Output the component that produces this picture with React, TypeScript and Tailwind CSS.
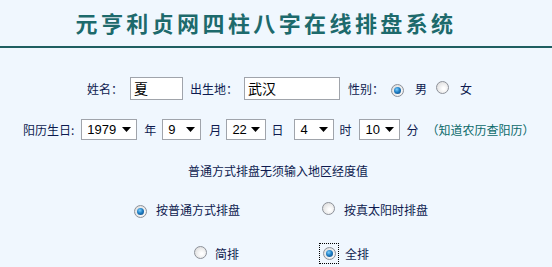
import React from 'react';

const font = { fontFamily: '"Noto Sans CJK SC", "Liberation Sans", sans-serif' };

const Radio: React.FC<{ checked?: boolean }> = ({ checked }) => (
  <span className="relative inline-flex h-[13px] w-[13px] shrink-0 items-center justify-center rounded-full border border-[#8d9199] bg-[radial-gradient(circle_at_60%_60%,#ffffff_10%,#dadada_90%)]">
    {checked && (
      <span className="h-[7px] w-[7px] rounded-full bg-[radial-gradient(circle_at_40%_35%,#7fd0ff_0%,#1f7fc4_45%,#0c3f78_100%)]" />
    )}
  </span>
);

const Select: React.FC<{ value: string; width: string }> = ({ value, width }) => (
  <div
    className={`flex h-[21px] ${width} items-center justify-between border border-[#a0a4ab] bg-white pl-[5px] pr-[5px] text-[13px] text-black`}
    style={{ fontFamily: '"Liberation Sans", Arial, sans-serif' }}
  >
    <span>{value}</span>
    <svg width="9" height="5" viewBox="0 0 9 5">
      <path d="M0 0 L9 0 L4.5 5 Z" fill="#000" />
    </svg>
  </div>
);

export default function App() {
  return (
    <div className="h-[267px] w-[552px] overflow-hidden bg-[#f0f7fe] text-[12px] text-[#0d1a4f]" style={font}>
      <div className="flex h-[48px] items-center justify-center border-b-2 border-[#1f5f61] pb-[2px]">
        <h1 className="pr-[20px] text-[22px] font-bold tracking-[3.4px] text-[#1d6a6c]">元亨利贞网四柱八字在线排盘系统</h1>
      </div>

      <div className="mt-[29px] flex items-center pl-[87px]">
        <span>姓名：</span>
        <div className="ml-[7px] flex h-[23px] w-[53px] items-center border border-[#a0a4ab] bg-white pl-[3px] text-[14px] text-black">夏</div>
        <span className="ml-[7px]">出生地：</span>
        <div className="ml-[6px] flex h-[23px] w-[96px] items-center border border-[#a0a4ab] bg-white pl-[3px] text-[14px] text-black">武汉</div>
        <span className="ml-[8px]">性别：</span>
        <span className="ml-[7px]"><Radio checked /></span>
        <span className="ml-[11px]">男</span>
        <span className="ml-[9px]"><Radio /></span>
        <span className="ml-[11px]">女</span>
      </div>

      <div className="mt-[19px] flex items-center pl-[23px]">
        <span>阳历生日:</span>
        <span className="ml-[7px]"><Select value="1979" width="w-[56px]" /></span>
        <span className="ml-[7px]">年</span>
        <span className="ml-[6px]"><Select value="9" width="w-[39px]" /></span>
        <span className="ml-[8px]">月</span>
        <span className="ml-[5px]"><Select value="22" width="w-[40px]" /></span>
        <span className="ml-[5px]">日</span>
        <span className="ml-[11px]"><Select value="4" width="w-[40px]" /></span>
        <span className="ml-[5px]">时</span>
        <span className="ml-[8px]"><Select value="10" width="w-[41px]" /></span>
        <span className="ml-[6px]">分</span>
        <span className="ml-[8px] text-[#0b6a6a]">（知道农历查阳历）</span>
      </div>

      <div className="mt-[22px] flex justify-center pl-[4px]">普通方式排盘无须输入地区经度值</div>

      <div className="mt-[21px] flex items-center">
        <span className="ml-[134px]"><Radio checked /></span>
        <span className="ml-[9px]">按普通方式排盘</span>
        <span className="ml-[82px]"><Radio /></span>
        <span className="ml-[9px]">按真太阳时排盘</span>
      </div>

      <div className="mt-[24px] flex items-center">
        <span className="ml-[194px]"><Radio /></span>
        <span className="ml-[8px]">简排</span>
        <span className="ml-[80px] flex h-[21px] w-[20px] items-center justify-center border border-dotted border-black">
          <Radio checked />
        </span>
        <span className="ml-[6px]">全排</span>
      </div>
    </div>
  );
}
